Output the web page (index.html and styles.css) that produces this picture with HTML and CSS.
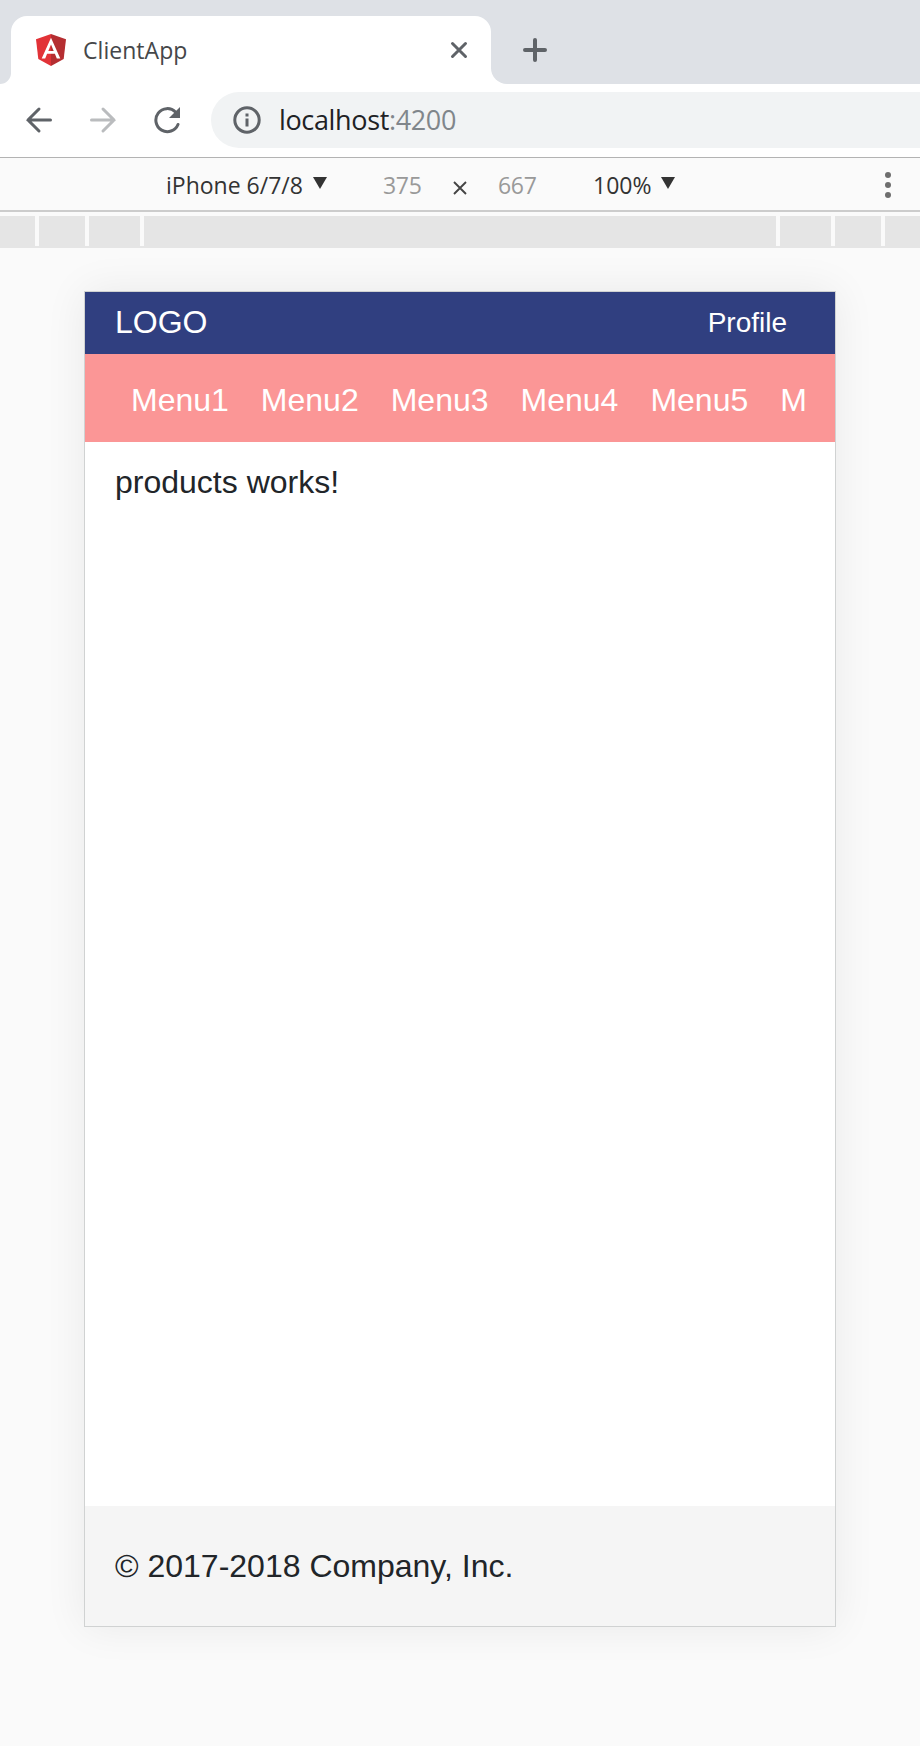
FILE: index.html
```
<!DOCTYPE html>
<html lang="en">
<head>
<meta charset="utf-8">
<title>ClientApp</title>
<link rel="stylesheet" href="styles.css">
</head>
<body>
<div class="tabstrip">
  <div class="tab-edge"></div>
  <div class="tab">
    <svg class="favicon" width="30" height="32" viewBox="0 0 30 32"><path fill="#e23237" d="M15 0 0 5.3 2.3 25 15 32z"/><path fill="#b52e31" d="M15 0 30 5.3 27.700 25 15 32z"/><path fill="#fff" fill-rule="evenodd" d="M15 3.700 5.700 24.500h3.500l1.900-4.700h7.800l1.900 4.700h3.500zm0 6.700 2.700 6.500h-5.400z"/></svg>
    <span class="tab-title">ClientApp</span>
    <svg class="tab-close" width="18" height="18" viewBox="0 0 18 18"><path d="M2.500 2.500 15.500 15.500M15.500 2.500 2.500 15.500"/></svg>
  </div>
  <div class="strip-rest">
    <svg class="new-tab" width="26" height="26" viewBox="0 0 26 26"><path d="M13 3v20M3 13h20"/></svg>
  </div>
</div>
<div class="toolbar">
  <svg class="nav" width="28" height="28" viewBox="0 0 28 28"><path d="M25.500 14H3M14 3 3 14l11 11"/></svg>
  <svg class="nav forward" width="28" height="28" viewBox="0 0 28 28"><path d="M2.500 14H25M14 3l11 11-11 11"/></svg>
  <svg class="nav" width="28" height="28" viewBox="0 0 28 28"><path d="M25 18.500A11.500 11.500 0 1 1 22.500 6"/><path class="solid" d="M27 1v11H16z"/></svg>
  <div class="omnibox">
    <svg class="info" width="28" height="28" viewBox="0 0 28 28"><circle cx="14" cy="14" r="12.200"/><path d="M14 7.500v3M14 12.500v8"/></svg>
    <span class="url">localhost<span class="port">:4200</span></span>
  </div>
</div>
<div class="devicebar">
  <span class="device">iPhone 6/7/8</span>
  <svg class="caret" width="14" height="12" viewBox="0 0 14 12"><path d="M0 0h14L7 12z"/></svg>
  <span class="dim width">375</span>
  <svg class="times" width="14" height="14" viewBox="0 0 14 14"><path d="M1 1 13 13M13 1 1 13"/></svg>
  <span class="dim height">667</span>
  <span class="zoom">100%</span>
  <svg class="caret" width="14" height="12" viewBox="0 0 14 12"><path d="M0 0h14L7 12z"/></svg>
  <svg class="more" width="6" height="26" viewBox="0 0 6 26"><circle cx="3" cy="3" r="3"/><circle cx="3" cy="13" r="3"/><circle cx="3" cy="23" r="3"/></svg>
</div>
<div class="ruler"><i></i><i></i><i></i><i></i><i></i><i></i><i></i></div>
<main class="device-frame">
  <header class="header"><span>LOGO</span><a class="profile">Profile</a></header>
  <nav class="menu"><a>Menu1</a><a>Menu2</a><a>Menu3</a><a>Menu4</a><a>Menu5</a><a>M</a></nav>
  <section class="content">products works!</section>
  <footer class="footer">© 2017-2018 Company, Inc.</footer>
</main>
</body>
</html>
```
FILE: styles.css
```
* { box-sizing: border-box; }
body { margin: 0; height: 1746px; overflow: hidden; background: #fafafa; font-family: "Open Sans", "Noto Sans", sans-serif; }
svg { flex: none; fill: none; }
span { white-space: nowrap; }

.tabstrip { display: flex; height: 84px; background: #fff; }
.tab-edge { width: 11px; background: #dee1e6; border-bottom-right-radius: 16px; }
.tab { width: 480px; display: flex; align-items: center; padding: 16px 23px 0 25px; position: relative; background: #dee1e6; }
.tab::before { content: ""; position: absolute; inset: 16px 0 0; background: #fff; border-radius: 16px 16px 0 0; }
.tab > * { position: relative; }
.tab-title { margin-left: 17px; padding-bottom: 1px; font-size: 23px; letter-spacing: 0.05px; color: #45474a; }
.tab-close { margin-left: auto; stroke: #5f6368; stroke-width: 3; stroke-linecap: round; }
.strip-rest { flex: 1; background: #dee1e6; border-bottom-left-radius: 16px; padding: 37px 0 0 31px; }
.new-tab { display: block; stroke: #5f6368; stroke-width: 4; stroke-linecap: round; }

.toolbar { height: 73px; display: flex; align-items: center; padding: 0 0 1px 25px; gap: 36px; background: #fff; }
.nav { stroke: #5f6368; stroke-width: 3; stroke-linecap: round; }
.forward { stroke: #babcbe; }
.solid { fill: #5f6368; stroke: none; }
.omnibox { flex: 1; height: 56px; margin-left: -6px; padding-left: 22px; display: flex; align-items: center; background: #f1f3f4; border-radius: 28px 0 0 28px; }
.info { stroke: #5f6368; stroke-width: 3; }
.url { margin-left: 18px; padding-bottom: 2px; font-size: 27px; letter-spacing: -0.35px; color: #202124; }
.port { color: #80868b; }

.devicebar { height: 55px; display: flex; align-items: center; padding: 2px 0 0 166px; border-top: 1px solid #b3b3b3; border-bottom: 2px solid #ccc; font-size: 23px; color: #333; }
.device { width: 137px; }
.zoom { width: 58px; margin-left: 56px; }
.caret { fill: #333; margin: -4px 0 0 10px; }
.dim { width: 39px; letter-spacing: -0.3px; color: #999; }
.width { margin-left: 56px; }
.times { margin: 5px 31px 0; stroke: #444; stroke-width: 1.900; }
.more { margin-left: auto; margin-right: 29px; fill: #6e6e6e; }

.ruler { height: 36px; margin-bottom: 43px; padding-top: 4px; display: grid; grid-template-columns: 35px 46px 51px 632px 51px 46px 35px; gap: 4px; border-bottom: 2px solid #e5e5e5; }
.ruler i { background: #e5e5e5; }

.device-frame { width: 752px; height: 1336px; margin: 0 84px; display: flex; flex-direction: column; background: #fff; border: 1px solid #d0d2d2; box-shadow: 0 0 40px rgba(0, 0, 0, .07); font: 32px/48px "Liberation Sans", Arial, sans-serif; color: #212529; }
.header { height: 62px; display: flex; align-items: center; justify-content: space-between; padding: 0 48px 2px 30px; background: #303f80; color: #fff; }
.profile { font-size: 28px; padding-top: 1px; }
.menu { height: 88px; display: flex; padding: 22px 14px 0 30px; background: #fb9696; color: #fff; }
.menu a { flex: none; padding: 0 16px; }
.content { flex: 1; padding: 16px 30px; }
.footer { height: 120px; padding: 36px 30px; background: #f5f5f5; }
```
